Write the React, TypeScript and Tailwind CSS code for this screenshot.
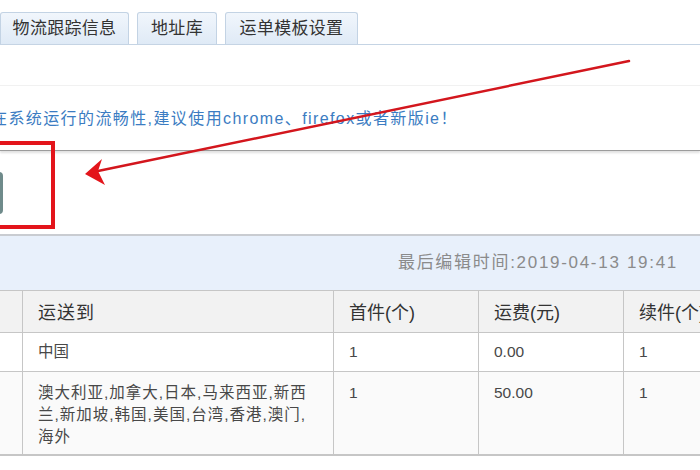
import React from "react";

const FONT = { fontFamily: '"Liberation Sans", "Noto Sans CJK SC", sans-serif' };

function Tab({ label, w }: { label: string; w: string }) {
  return (
    <div
      className={`${w} h-[32px] flex items-center justify-center rounded-t-[3px] border border-b-0 border-[#c3d3e4] bg-gradient-to-b from-[#f1f6fc] to-[#dfeaf6] text-[17px] tracking-[0.3px] text-[#333]`}
    >
      {label}
    </div>
  );
}

export default function App() {
  return (
    <div className="relative w-[700px] h-[470px] overflow-hidden bg-white" style={FONT}>
      {/* tabs */}
      <div className="flex items-end gap-2 h-[45px] pt-3 border-b border-[#c5d4e4]">
        <Tab label="物流跟踪信息" w="w-[129px]" />
        <Tab label="地址库" w="w-[80px]" />
        <Tab label="运单模板设置" w="w-[133px]" />
      </div>

      {/* spacer */}
      <div className="h-[40px]" />

      {/* notice box */}
      <div className="h-[66px] border-t border-[#f1f1f1] border-b border-b-[#9c9c9c] shadow-[0_2px_2px_rgba(0,0,0,0.12)] flex items-center">
        <span className="-ml-[9px] pt-[2px] text-[16px] tracking-[1.4px] text-[#3b7cc2] whitespace-nowrap">
          在系统运行的流畅性,建议使用chrome、firefox或者新版ie！
        </span>
      </div>

      {/* toolbar */}
      <div className="h-[83px] flex items-center">
        <div className="-ml-[60px] mt-[1px] w-[63px] h-[42px] rounded-[4px] bg-[#6f8b8b]" />
      </div>

      {/* section bar */}
      <div className="h-[56px] border-t-2 border-[#c9ccd1] bg-[#e8f0fb] flex items-center justify-end pr-[22px]">
        <span className="text-[17px] tracking-[1.7px] text-[#8b8b8b]">最后编辑时间:2019-04-13 19:41</span>
      </div>

      {/* table */}
      <table className="table-fixed border-collapse w-[790px] -ml-px text-[#484848]">
        <colgroup>
          <col className="w-[23px]" />
          <col className="w-[311px]" />
          <col className="w-[145px]" />
          <col className="w-[145px]" />
          <col className="w-[166px]" />
        </colgroup>
        <thead>
          <tr className="h-[42px] bg-[#f2f2f2] text-[18px] text-[#333]">
            <th className="border border-[#c6c6c6] font-normal text-left" />
            <th className="border border-[#c6c6c6] font-normal text-left pl-[15px] pt-[3px] tracking-[1px]">运送到</th>
            <th className="border border-[#c6c6c6] font-normal text-left pl-[15px] pt-[3px]">首件(个)</th>
            <th className="border border-[#c6c6c6] font-normal text-left pl-[15px] pt-[3px]">运费(元)</th>
            <th className="border border-[#c6c6c6] font-normal text-left pl-[15px] pt-[3px]">续件(个)</th>
          </tr>
        </thead>
        <tbody className="text-[15.5px]">
          <tr className="h-[39px] bg-white">
            <td className="border border-[#c6c6c6]" />
            <td className="border border-[#c6c6c6] pl-[15px]">中国</td>
            <td className="border border-[#c6c6c6] pl-[15px]">1</td>
            <td className="border border-[#c6c6c6] pl-[15px]">0.00</td>
            <td className="border border-[#c6c6c6] pl-[15px]">1</td>
          </tr>
          <tr className="h-[83px] bg-[#fafafa] align-top">
            <td className="border border-[#c6c6c6] border-b-2" />
            <td className="border border-[#c6c6c6] border-b-2 pl-[15px] pt-[10px] leading-[22px] tracking-[1px]">
              澳大利亚,加拿大,日本,马来西亚,新西
              <br />
              兰,新加坡,韩国,美国,台湾,香港,澳门,
              <br />
              海外
            </td>
            <td className="border border-[#c6c6c6] border-b-2 pl-[15px] pt-[10px] leading-[22px]">1</td>
            <td className="border border-[#c6c6c6] border-b-2 pl-[15px] pt-[10px] leading-[22px]">50.00</td>
            <td className="border border-[#c6c6c6] border-b-2 pl-[15px] pt-[10px] leading-[22px]">1</td>
          </tr>
        </tbody>
      </table>

      {/* red highlight rectangle */}
      <div className="absolute left-[-10px] top-[141px] w-[65px] h-[88px] border-[4px] border-[#e3151b]" />

      {/* red arrow */}
      <svg className="absolute left-0 top-0" width="700" height="470" viewBox="0 0 700 470">
        <line x1="629" y1="61" x2="98" y2="171" stroke="#d3161d" strokeWidth="2.5" strokeLinecap="round" />
        <polygon points="85,174 102,159 98,171 105,185" fill="#e3151b" />
      </svg>
    </div>
  );
}
